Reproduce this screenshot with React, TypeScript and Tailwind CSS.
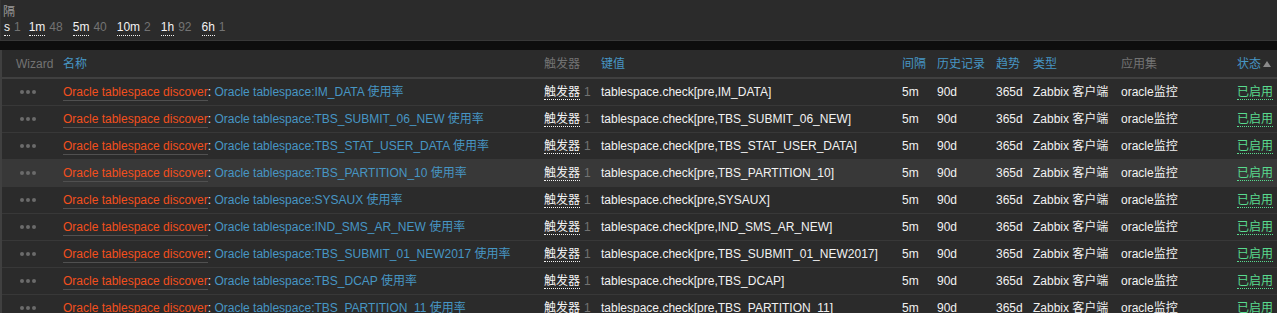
const filters = [
  { tag: 's', count: '1' },
  { tag: '1m', count: '48' },
  { tag: '5m', count: '40' },
  { tag: '10m', count: '2' },
  { tag: '1h', count: '92' },
  { tag: '6h', count: '1' },
];

const items = [
  'IM_DATA',
  'TBS_SUBMIT_06_NEW',
  'TBS_STAT_USER_DATA',
  'TBS_PARTITION_10',
  'SYSAUX',
  'IND_SMS_AR_NEW',
  'TBS_SUBMIT_01_NEW2017',
  'TBS_DCAP',
  'TBS_PARTITION_11',
];

// column widths measured from the screenshot (the table has a 2px left border)
const cols = 'grid grid-cols-[61px_481px_57px_301px_35px_59px_37px_88px_116px_40px]';

const Dots = () => (
  <div className="flex items-center gap-[2px] pl-[18px]">
    <span className="w-[4px] h-[4px] rounded-full bg-[#6b6b6b]" />
    <span className="w-[4px] h-[4px] rounded-full bg-[#6b6b6b]" />
    <span className="w-[4px] h-[4px] rounded-full bg-[#6b6b6b]" />
  </div>
);

export default function App() {
  return (
    <div
      className="w-[1277px] h-[313px] overflow-hidden bg-[#2b2b2b] text-[12px] text-[#f2f2f2] leading-[14px]"
      style={{ fontFamily: '"Liberation Sans", Arial, "Noto Sans CJK SC", sans-serif' }}
    >
      {/* filter area */}
      <div className="h-[40px] pl-[2px] pt-[5px] border-l border-[#333]">
        <div className="text-[#9a9a9a] h-[15px]">隔</div>
        <div className="flex items-center pl-[1px]">
          {filters.map((f, i) => (
            <div key={f.tag} className={`flex items-center ${i === 0 ? 'mr-[8px]' : 'mr-[10px]'}`}>
              <span className="border-b border-dotted border-[#f2f2f2] pb-[1px]">{f.tag}</span>
              <span className="ml-[4px] text-[#737373] pb-[2px]">{f.count}</span>
            </div>
          ))}
        </div>
      </div>
      <div className="h-[10px] bg-[#0e0e0e] border-t border-[#383838]" />

      {/* table */}
      <div className="border-l-2 border-[#404040]">
        <div className={`${cols} h-[29px] items-center border-b-2 border-[#404040] text-[#4796c4]`}>
          <div className="pl-[14px] text-[#737373]">Wizard</div>
          <div>名称</div>
          <div className="text-[#737373]">触发器</div>
          <div>键值</div>
          <div>间隔</div>
          <div>历史记录</div>
          <div>趋势</div>
          <div>类型</div>
          <div className="text-[#737373]">应用集</div>
          <div className="flex items-center whitespace-nowrap">
            状态
            <svg width="8" height="6" viewBox="0 0 8 6" className="ml-[2px]">
              <path d="M4 0 L8 6 L0 6 Z" fill="#8a8a8a" />
            </svg>
          </div>
        </div>

        {items.map((it, i) => (
          <div
            key={it}
            className={`${cols} h-[27px] items-center border-b border-[#383838] whitespace-nowrap ${
              i === 3 ? 'bg-[#383838]' : ''
            }`}
          >
            <Dots />
            <div>
              <span className="text-[#f24f1d] border-b border-[#505050] pb-[1px]">Oracle tablespace discover</span>
              <span>: </span>
              <span className="text-[#4796c4]">Oracle tablespace:{it} 使用率</span>
            </div>
            <div>
              <span className="border-b border-dotted border-[#f2f2f2]">触发器</span>
              <span className="ml-[4px] text-[#737373]">1</span>
            </div>
            <div>tablespace.check[pre,{it}]</div>
            <div>5m</div>
            <div>90d</div>
            <div>365d</div>
            <div>Zabbix 客户端</div>
            <div>oracle监控</div>
            <div>
              <span className="text-[#59db8f] border-b border-dotted border-[#59db8f]">已启用</span>
            </div>
          </div>
        ))}
      </div>
    </div>
  );
}
